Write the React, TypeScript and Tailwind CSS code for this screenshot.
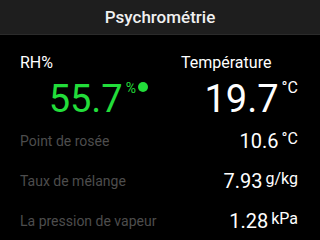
import React from 'react';

const font = { fontFamily: 'Roboto, "Liberation Sans", sans-serif' };

const rows = [
  { label: 'Point de rosée', value: '10.6', unit: '°C' },
  { label: 'Taux de mélange', value: '7.93', unit: 'g/kg' },
  { label: 'La pression de vapeur', value: '1.28', unit: 'kPa' },
];

export default function App() {
  return (
    <div className="w-[320px] h-[240px] bg-black text-white overflow-hidden" style={font}>
      {/* Title bar */}
      <div className="h-[35px] bg-[#1e1e1e] border-b border-[#2b2b2b] flex items-center justify-center">
        <span className="text-[17px] font-medium leading-none text-[#f0f0f0] mt-[1px]">Psychrométrie</span>
      </div>

      {/* Main readings */}
      <div className="grid grid-cols-2 pt-[20px]">
        <div className="pl-[20px] pr-[12px]">
          <div className="text-[16px] leading-none">RH%</div>
          <div className="flex justify-end items-start mt-[9px]">
            <span className="text-[38px] leading-none text-[#22dd3a]">55.7</span>
            <span className="text-[14px] leading-none text-[#22dd3a] mt-[1px] ml-[3px]">%</span>
            <span className="w-[10px] h-[10px] rounded-full bg-[#22dd3a] mt-[2px] ml-[2px]"></span>
          </div>
        </div>
        <div className="pl-[21px] pr-[22px]">
          <div className="text-[16px] leading-none">Température</div>
          <div className="flex justify-end items-start mt-[9px]">
            <span className="text-[38px] leading-none">19.7</span>
            <span className="text-[16px] leading-none ml-[3px]">°C</span>
          </div>
        </div>
      </div>

      {/* Secondary readings */}
      <div className="flex flex-col gap-[20px] px-[20px] pr-[22px] mt-[13px]">
        {rows.map((r) => (
          <div key={r.label} className="flex items-center justify-between h-[20px]">
            <span className="text-[14px] text-[#4d4d4d] leading-none">{r.label}</span>
            <span className="flex items-start">
              <span className="text-[20px] leading-none">{r.value}</span>
              <span className="text-[16px] leading-none ml-[3px]">{r.unit}</span>
            </span>
          </div>
        ))}
      </div>
    </div>
  );
}
